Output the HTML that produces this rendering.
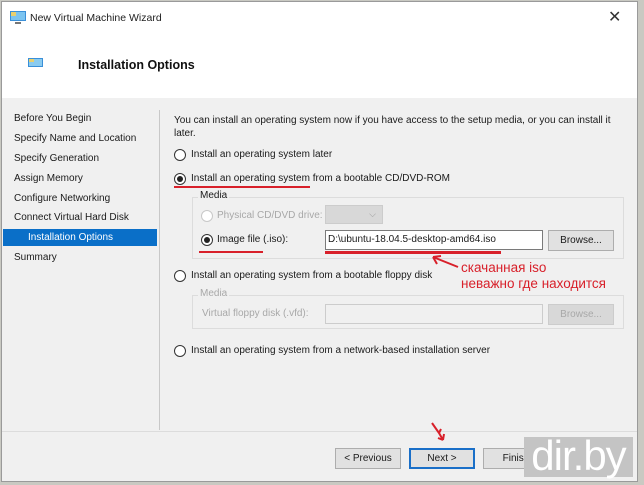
<!DOCTYPE html>
<html><head><meta charset="utf-8"><style>
*{margin:0;padding:0;box-sizing:border-box}
body{width:644px;height:485px;background:#c9c9c2;position:relative;overflow:hidden;font-family:"Liberation Sans",sans-serif;font-size:10px;color:#1a1a1a}
.a{position:absolute;white-space:nowrap}
.win{position:absolute;left:1px;top:1px;width:637px;height:481px;background:#f0f0f0;border:1px solid #9a9a9a}
.rad{position:absolute;width:12px;height:12px;border:1px solid #333;border-radius:50%;background:#fff}
.rad.on::after{content:"";position:absolute;left:2px;top:2px;width:6px;height:6px;border-radius:50%;background:#222}
.rad.dis{border-color:#c8c8c8}
.btn{position:absolute;height:21px;border:1px solid #adadad;background:#e1e1e1;text-align:center;line-height:19px}
.red{position:absolute;height:2px;background:#d8202a}
.grp{position:absolute;border:1px solid #dcdcdc}
</style></head><body>
<div class="win">
 <div class="a" style="left:0;top:0;width:635px;height:96px;background:#fff"></div>
 <svg class="a" style="left:8px;top:9px" width="16" height="13"><rect x="0" y="0" width="16" height="10" fill="#3a8fd8"/><rect x="1" y="1" width="14" height="8" fill="#7cc4f0"/><rect x="1" y="1" width="5" height="4" fill="#e8d070"/><rect x="5" y="11" width="6" height="2" fill="#777"/></svg>
 <div class="a" style="left:28px;top:10px;font-size:10.5px;color:#222">New Virtual Machine Wizard</div>
 <div class="a" style="left:606px;top:5px;font-size:16px;color:#333">✕</div>
 <svg class="a" style="left:26px;top:56px" width="15" height="11"><rect width="15" height="9" fill="#3a8fd8"/><rect x="1" y="1" width="13" height="7" fill="#8acbf0"/><rect x="1" y="1" width="5" height="3" fill="#e8d070"/></svg>
 <div class="a" style="left:76px;top:56px;font-size:12.5px;font-weight:bold;color:#111">Installation Options</div>

 <div class="a" style="left:12px;top:111px">Before You Begin</div>
 <div class="a" style="left:12px;top:131px">Specify Name and Location</div>
 <div class="a" style="left:12px;top:151px">Specify Generation</div>
 <div class="a" style="left:12px;top:171px">Assign Memory</div>
 <div class="a" style="left:12px;top:191px">Configure Networking</div>
 <div class="a" style="left:12px;top:210px">Connect Virtual Hard Disk</div>
 <div class="a" style="left:1px;top:227px;width:154px;height:17px;background:#0a6fc8"></div>
 <div class="a" style="left:26px;top:230px;color:#fff">Installation Options</div>
 <div class="a" style="left:12px;top:250px">Summary</div>
 <div class="a" style="left:157px;top:108px;width:1px;height:320px;background:#c8c8c8"></div>

 <div class="a" style="left:172px;top:113px">You can install an operating system now if you have access to the setup media, or you can install it</div>
 <div class="a" style="left:172px;top:126px">later.</div>
 <div class="rad" style="left:172px;top:147px"></div>
 <div class="a" style="left:189px;top:147px">Install an operating system later</div>
 <div class="rad on" style="left:172px;top:171px"></div>
 <div class="a" style="left:189px;top:171px">Install an operating system from a bootable CD/DVD-ROM</div>
 <div class="red" style="left:172px;top:184px;width:136px"></div>

 <div class="grp" style="left:190px;top:195px;width:432px;height:62px"></div>
 <div class="a" style="left:196px;top:188px;background:#f0f0f0;padding:0 2px">Media</div>
 <div class="rad dis" style="left:199px;top:208px"></div>
 <div class="a" style="left:215px;top:208px;color:#a8a8a8">Physical CD/DVD drive:</div>
 <div class="a" style="left:323px;top:203px;width:58px;height:19px;background:#d8d8d8;border:1px solid #ccc;color:#999;text-align:right;padding-right:6px;font-size:9px;line-height:17px">⌵</div>
 <div class="rad on" style="left:199px;top:232px"></div>
 <div class="a" style="left:215px;top:232px">Image file (.iso):</div>
 <div class="red" style="left:197px;top:249px;width:64px"></div>
 <div class="a" style="left:323px;top:228px;width:218px;height:20px;background:#fff;border:1px solid #7a7a7a;padding-left:2px;line-height:18px">D:\ubuntu-18.04.5-desktop-amd64.iso</div>
 <div class="red" style="left:323px;top:249px;width:176px;height:3px"></div>
 <div class="btn" style="left:546px;top:228px;width:66px">Browse...</div>
 <svg class="a" style="left:428px;top:252px" width="30" height="16"><path d="M3 3 L28 13 M3 3 L11 2 M3 3 L7 10" stroke="#d8202a" stroke-width="2" fill="none"/></svg>
 <div class="a" style="left:459px;top:258px;font-size:13.5px;color:#d8202a;line-height:16px">скачанная iso<br>неважно где находится</div>

 <div class="rad" style="left:172px;top:268px"></div>
 <div class="a" style="left:189px;top:268px">Install an operating system from a bootable floppy disk</div>
 <div class="grp" style="left:190px;top:293px;width:432px;height:34px"></div>
 <div class="a" style="left:196px;top:286px;background:#f0f0f0;padding:0 2px;color:#a8a8a8">Media</div>
 <div class="a" style="left:200px;top:306px;color:#a8a8a8">Virtual floppy disk (.vfd):</div>
 <div class="a" style="left:323px;top:302px;width:218px;height:20px;background:#f0f0f0;border:1px solid #ccc"></div>
 <div class="btn" style="left:546px;top:302px;width:66px;background:#d8d8d8;border-color:#ccc;color:#a8a8a8">Browse...</div>
 <div class="rad" style="left:172px;top:343px"></div>
 <div class="a" style="left:189px;top:343px">Install an operating system from a network-based installation server</div>

 <div class="a" style="left:0;top:429px;width:635px;height:1px;background:#dcdcdc"></div>
 <svg class="a" style="left:427px;top:419px" width="18" height="22"><path d="M3 2 L10 12 L12 8 M10 12 L14 19 M14 19 L9 17 M14 19 L15 13" stroke="#d8202a" stroke-width="2" fill="none"/></svg>
 <div class="btn" style="left:333px;top:446px;width:66px">&lt; Previous</div>
 <div class="btn" style="left:407px;top:446px;width:66px;border:2px solid #1a6fc8;line-height:17px">Next &gt;</div>
 <div class="btn" style="left:481px;top:446px;width:66px">Finish</div>
 <div class="btn" style="left:555px;top:446px;width:66px">Cancel</div>
 <div class="a" style="left:522px;top:435px;width:109px;height:40px;background:#c4c4c4;color:#fff;font-size:42px;line-height:38px;text-align:center;letter-spacing:-1px">dir.by</div>
</div>
</body></html>
